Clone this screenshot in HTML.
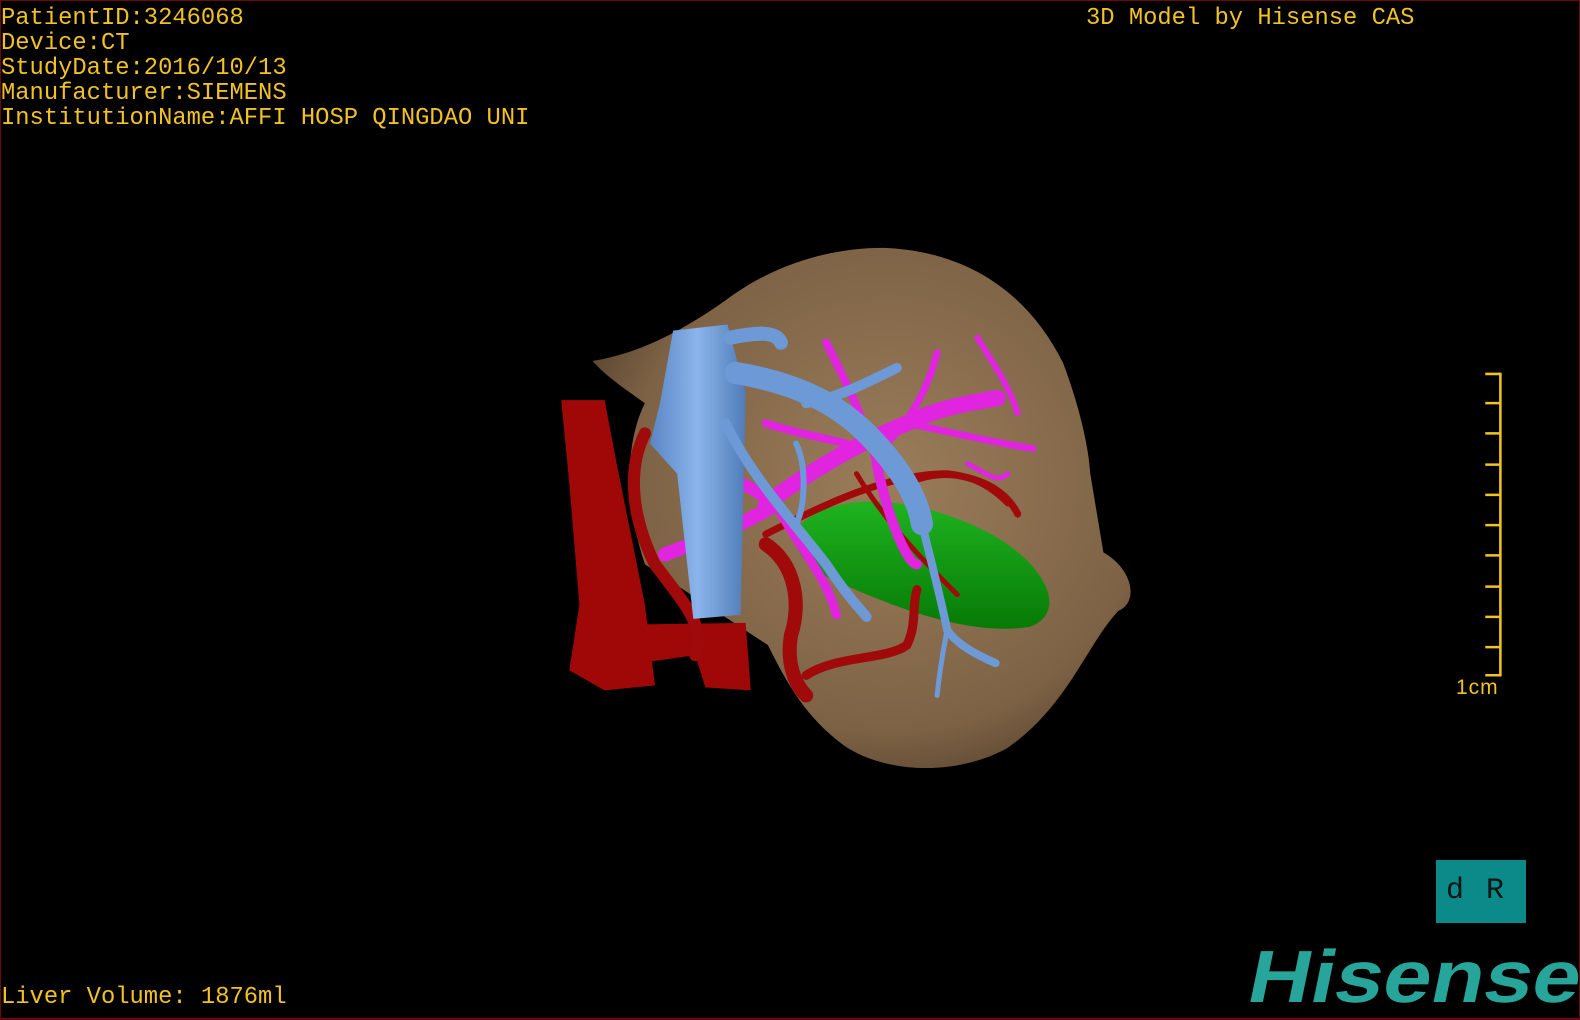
<!DOCTYPE html>
<html><head><meta charset="utf-8"><style>
html,body{margin:0;padding:0;background:#000;}
#w{position:relative;width:1580px;height:1020px;background:#000;overflow:hidden;}
#frame{position:absolute;left:0;top:0;width:1578px;height:1017px;border:1px solid #6a0a0a;border-right:2px solid #6a0a0a;border-bottom:2px solid #6a0a0a;box-sizing:content-box;}
.t{position:absolute;font-family:"Liberation Mono",monospace;font-size:23.8px;color:#f2c224;white-space:pre;line-height:25px;}
#hdr{left:1px;top:6px;}
#cas{left:1086px;top:6px;}
#vol{left:1px;top:985px;}
#cm{position:absolute;left:1456px;top:676px;font-family:"Liberation Sans",sans-serif;font-size:21px;color:#f2c224;letter-spacing:1px;}
#box{position:absolute;left:1436px;top:860px;width:90px;height:63px;background:#0c8a8a;}
#box span{position:absolute;top:14px;font-family:"Liberation Mono",monospace;font-size:30px;color:#061414;}
#logo{position:absolute;left:1258px;top:937px;font-family:"Liberation Sans",sans-serif;font-weight:bold;font-size:74px;color:#27a59a;line-height:80px;transform-origin:0 0;transform:scaleX(1.17) skewX(-10deg);}
</style></head><body><div id="w">
<svg width="1580" height="1020" viewBox="0 0 1568 1012" preserveAspectRatio="none" style="position:absolute;left:0;top:0">
<defs>
<radialGradient id="lv" cx="0.55" cy="0.45" r="0.6"><stop offset="0" stop-color="#9a7d5a"/><stop offset="0.8" stop-color="#7d6245"/><stop offset="1" stop-color="#5e4832"/></radialGradient>
<linearGradient id="gb" x1="0" y1="0" x2="0" y2="1"><stop offset="0" stop-color="#1fb31f"/><stop offset="1" stop-color="#067a06"/></linearGradient>
<linearGradient id="bl" x1="0" y1="0" x2="1" y2="0"><stop offset="0" stop-color="#5a86c4"/><stop offset="0.5" stop-color="#8ab4ea"/><stop offset="1" stop-color="#4f7cb8"/></linearGradient>
</defs>
<path fill="url(#lv)" d="M588,358 C630,352 675,330 720,298 C770,260 830,245 880,246 C960,250 1020,290 1055,360 C1070,400 1080,440 1082,470 L1095,548 C1125,565 1130,598 1110,606 C1078,640 1060,700 1000,742 C950,770 880,768 838,740 C800,712 782,680 762,640 L640,560 C620,500 620,440 640,400 C620,386 600,372 588,358 Z"/>
<path fill="url(#gb)" d="M795,520 C830,488 905,490 980,528 C1040,560 1060,608 1022,622 C960,632 880,600 820,572 C790,556 785,536 795,520 Z"/>
<g fill="#a00808">
<path d="M557,397 L600,397 L612,460 L640,600 L650,680 L600,685 L565,665 L575,600 L565,480 Z"/>
<path d="M600,620 L740,618 L745,685 L700,682 L690,650 L620,660 Z"/>
</g>
<g fill="none" stroke="#a00a0a" stroke-linecap="round">
<path d="M640,430 C620,470 630,520 650,560 C680,600 700,620 690,650" stroke-width="12"/>
<path d="M760,540 C790,560 795,600 785,630 C780,660 790,680 800,690" stroke-width="14"/>
<path d="M800,670 C830,650 880,655 900,640 C910,620 905,600 910,585" stroke-width="9"/>
<path d="M760,530 C820,500 880,470 940,470 C980,475 1000,490 1010,510" stroke-width="7"/>
<path d="M850,470 C880,520 920,560 950,590" stroke-width="5"/>
<path d="M900,480 C950,460 980,480 1000,500" stroke-width="5"/>
</g>
<g fill="none" stroke="#e024e0" stroke-linecap="round">
<path d="M665,440 C700,460 740,480 770,500" stroke-width="12"/>
<path d="M760,500 C800,470 850,440 900,420 C930,405 960,400 990,395" stroke-width="16"/>
<path d="M820,340 C840,380 860,420 870,460" stroke-width="8"/>
<path d="M870,460 C880,510 900,560 910,560" stroke-width="10"/>
<path d="M900,420 C950,430 990,440 1025,445" stroke-width="7"/>
<path d="M970,335 C985,360 1000,380 1010,410" stroke-width="6"/>
<path d="M930,350 C920,390 900,420 880,440" stroke-width="7"/>
<path d="M760,420 C790,430 820,435 840,440" stroke-width="8"/>
<path d="M770,500 C790,540 820,570 830,610" stroke-width="9"/>
<path d="M770,500 C740,520 700,535 660,550" stroke-width="14"/>
<path d="M960,460 C980,470 990,480 1000,470" stroke-width="5"/>
</g>
<path fill="url(#bl)" d="M668,328 L722,322 L740,390 L735,610 L688,614 L672,470 L645,440 L655,400 Z"/>
<g fill="none" stroke="#6d9ad6" stroke-linecap="round">
<path d="M730,370 C790,380 830,400 860,430 C890,460 910,490 915,520" stroke-width="22"/>
<path d="M725,335 C750,330 770,328 775,340" stroke-width="14"/>
<path d="M800,400 C830,395 860,380 890,365" stroke-width="10"/>
<path d="M720,420 C750,480 790,520 820,560 C840,590 850,600 860,612" stroke-width="10"/>
<path d="M915,520 C925,560 935,600 940,625 C950,640 970,650 988,658" stroke-width="8"/>
<path d="M940,625 C935,650 932,670 930,690" stroke-width="5"/>
<path d="M790,440 C800,460 800,500 790,520" stroke-width="6"/>
</g>
<g stroke="#f2c224" stroke-width="2.5" fill="none">
<path d="M1489,370 L1489,671"/>
<path d="M1474,371 H1490 M1474,400 H1490 M1474,430 H1490 M1474,461 H1490 M1474,491 H1490 M1474,521 H1490 M1474,551 H1490 M1474,582 H1490 M1474,612 H1490 M1474,642 H1490 M1474,670 H1490"/>
</g>
</svg>
<div id="frame"></div>
<div class="t" id="hdr">PatientID:3246068
Device:CT
StudyDate:2016/10/13
Manufacturer:SIEMENS
InstitutionName:AFFI HOSP QINGDAO UNI</div>
<div class="t" id="cas">3D Model by Hisense CAS</div>
<div class="t" id="vol">Liver Volume: 1876ml</div>
<div id="cm">1cm</div>
<div id="box"><span style="left:10px">d</span><span style="left:50px">R</span></div>
<div id="logo">Hisense</div>
</div></body></html>
